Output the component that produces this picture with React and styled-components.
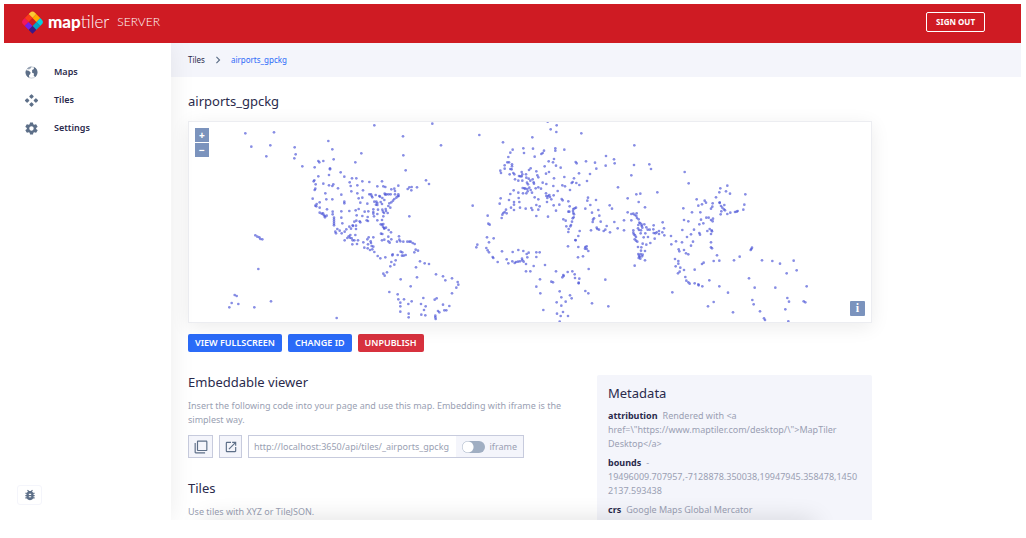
import React from "react";
import styled, { createGlobalStyle, ThemeProvider } from "styled-components";
import { MdFilterNone, MdOpenInNew, MdBugReport, MdChevronRight } from "react-icons/md";
import { IoMdSettings } from "react-icons/io";

const theme = {
    red: "#cf1b23",
    danger: "#d7313e",
    blue: "#2b6bf8",
    ink: "#2a2a4c",
    muted: "#9a9fb3",
    steel: "#5d6f88",
    pale: "#f4f5fb",
    line: "#c7cbdd",
    control: "#7b93bd",
    dot: "#4650d6",
};

const GlobalStyle = createGlobalStyle`
    * {
        box-sizing: border-box;
    }

    body {
        margin: 0;
        background: #fff;
        font-family: "Noto Sans", "Open Sans", sans-serif;
        font-size: 9px;
        line-height: 14px;
    }

    h1, h2, p, ul, ol, dl, dd {
        margin: 0;
        padding: 0;
    }

    button, input {
        font: inherit;
    }
`

const Page = styled.div`
    height: 100vh;
    padding: 4px 5px 18px 4px;
    display: flex;
    flex-direction: column;
    color: ${props => props.theme.ink};
`

const Header = styled.header`
    flex: none;
    height: 39px;
    padding: 0 36px 4px 18px;
    display: flex;
    align-items: center;
    justify-content: space-between;
    background: ${props => props.theme.red};
    color: #fff;
`

const Brand = styled.a`
    display: flex;
    align-items: center;
    gap: 5px;
    color: inherit;
    text-decoration: none;
    font-family: Lato, sans-serif;
    line-height: 20px;

    svg {
        width: 21px;
        height: 24px;
    }
`

const BrandName = styled.span`
    font-size: 17px;
    font-weight: 300;

    b {
        font-weight: 900;
    }
`

const BrandProduct = styled.span`
    margin-left: 3px;
    font-size: 12px;
    font-weight: 300;
`

const SignOut = styled.button`
    height: 20px;
    padding: 0 9px;
    border: 1px solid #fff;
    border-radius: 2px;
    background: none;
    color: #fff;
    font-size: 8px;
    font-weight: 700;
    line-height: 10px;
`

const Body = styled.div`
    flex: 1;
    min-height: 0;
    display: flex;
`

const Sidebar = styled.aside`
    flex: none;
    width: 167px;
    padding: 15px 13px 15px 20px;
    display: flex;
    flex-direction: column;
    justify-content: space-between;
    align-items: flex-start;
    background: #fff;
    box-shadow: 0 0 24px rgba(0, 0, 0, 0.08);
    clip-path: inset(0 -24px 0 0);
    z-index: 1;
`

const Menu = styled.ul`
    list-style: none;
`

const MenuLink = styled.a`
    height: 28px;
    display: flex;
    align-items: center;
    gap: 15px;
    color: inherit;
    font-weight: 600;
    text-decoration: none;

    svg {
        width: 15px;
        height: 15px;
        color: ${props => props.theme.steel};
    }
`

const BugButton = styled.button`
    width: 25px;
    height: 20px;
    margin-left: -7px;
    padding: 0;
    display: grid;
    place-items: center;
    border: 1px solid ${props => props.theme.pale};
    border-radius: 3px;
    background: #fff;
    color: ${props => props.theme.steel};

    svg {
        width: 14px;
        height: 14px;
    }
`

const Content = styled.main`
    position: relative;
    flex: 1;
    min-width: 0;
    overflow: hidden;

    &:after {
        content: "";
        position: absolute;
        left: 32px;
        right: 206px;
        bottom: -14px;
        height: 12px;
        box-shadow: 0 0 24px rgba(0, 0, 0, 0.2);
    }
`

const Breadcrumb = styled.nav`
    height: 34px;
    padding: 0 17px;
    display: flex;
    align-items: center;
    gap: 6px;
    background: ${props => props.theme.pale};
    font-size: 8px;

    svg {
        width: 14px;
        height: 14px;
        color: ${props => props.theme.steel};
    }
`

const Crumb = styled.a`
    color: ${props => props.$current ? props.theme.blue : props.theme.ink};
    text-decoration: none;
`

const Inner = styled.div`
    max-width: 718px;
    padding: 14px 17px;
`

const Title = styled.h1`
    margin-bottom: 10px;
    font-size: 13px;
    font-weight: 400;
    line-height: 20px;
`

const Heading = styled.h2`
    margin-bottom: 10px;
    font-size: 13px;
    font-weight: 400;
    line-height: 14px;
`

const MapBox = styled.div`
    position: relative;
    height: 202px;
    border: 1px solid #ecedf1;
    background: #fff;
    box-shadow: 0 4px 18px rgba(0, 0, 0, 0.08);
`

const Points = styled.svg`
    display: block;
    width: 100%;
    height: 100%;

    circle {
        fill: ${props => props.theme.dot};
        fill-opacity: 0.65;
    }
`

const ZoomControls = styled.div`
    position: absolute;
    top: 6px;
    left: 6px;
    display: grid;
    gap: 1px;
`

const MapButton = styled.button`
    width: 14px;
    height: 14px;
    padding: 0;
    border: 0;
    background: ${props => props.theme.control};
    color: #fff;
    font-size: 10px;
    font-weight: 800;
    line-height: 14px;
`

const InfoButton = styled(MapButton)`
    position: absolute;
    right: 6px;
    bottom: 6px;
    height: 15px;
    width: 15px;
    border-radius: 1px;
    font-family: "Liberation Serif", serif;
    font-size: 12px;
    line-height: 15px;
`

const Actions = styled.div`
    margin-top: 11px;
    display: flex;
    gap: 6px;
`

const Action = styled.button`
    height: 18px;
    padding: 0 7px;
    border: 0;
    border-radius: 2px;
    background: ${props => props.$danger ? props.theme.danger : props.theme.blue};
    color: #fff;
    font-size: 9px;
    font-weight: 600;
    line-height: 18px;
`

const Columns = styled.div`
    margin-top: 23px;
    display: grid;
    grid-template-columns: minmax(0, 1fr) 275px;
    gap: 12px;
`

const Text = styled.p`
    color: ${props => props.theme.muted};
`

const EmbedRow = styled.div`
    margin: 8px 0 23px;
    display: flex;
    gap: 6px;
`

const IconButton = styled.button`
    width: ${props => props.$wide ? 25 : 23}px;
    height: 23px;
    padding: 0;
    display: grid;
    place-items: center;
    border: 1px solid ${props => props.theme.line};
    background: ${props => props.theme.pale};
    color: ${props => props.theme.steel};

    svg {
        width: 14px;
        height: 14px;
    }
`

const EmbedField = styled.div`
    width: 276px;
    height: 23px;
    display: flex;
    border: 1px solid ${props => props.theme.line};
`

const UrlInput = styled.input`
    flex: 1;
    min-width: 0;
    padding: 0 5px;
    border: 0;
    color: ${props => props.theme.muted};
    outline: none;
`

const SwitchLabel = styled.label`
    padding: 0 6px;
    display: flex;
    align-items: center;
    gap: 5px;
    background: ${props => props.theme.pale};
    color: ${props => props.theme.muted};
`

const Switch = styled.input`
    appearance: none;
    width: 23px;
    height: 12px;
    margin: 0;
    border-radius: 6px;
    background: radial-gradient(circle at ${props => props.checked ? "17px" : "6px"} 6px, #fff 5px, #a0aec2 6px);
`

const Metadata = styled.section`
    padding: 11px;
    border-radius: 2px;
    background: ${props => props.theme.pale};

    ${Heading} {
        margin-bottom: 9px;
    }
`

const MetaItem = styled.div`
    margin-bottom: 5px;
    overflow-wrap: break-word;
    color: ${props => props.theme.muted};

    dt, dd {
        display: inline;
    }

    dt {
        margin-right: 5px;
        color: ${props => props.theme.ink};
        font-weight: 700;
    }
`

// Airport positions, three units to a pixel, grouped by part of the world
const regions = [
    {
        name: "americas",
        shift: "-27 -21",
        points: `583,31 669,64 196,55 282,52 214,95 271,91 259,124 344,97 347,118 343,130 367,154 445,78 457,103 461,133 544,115 526,142 670,121 677,166
            415,138 418,142 430,138 404,157 450,160 450,163 482,172 447,180 415,184 403,196 401,199 407,208 430,206 447,211 457,213 460,208 474,220 493,185 516,190 529,190
            509,202 512,213 514,229 532,211 532,235 549,226 547,199 568,201 592,214 606,199 610,214 616,216 634,223 643,221 645,228 655,212 656,243 683,222 688,217
            406,221 404,225 436,235 398,251 439,253 457,253 484,239 493,260 493,265 410,267 419,262 406,272 409,274 419,278 441,283 419,293 425,296 429,295 431,300 434,303 440,302 435,307
            458,290 458,298 484,289 508,288 484,308 462,308 462,314 462,320 462,326 462,331 487,325 472,342 466,350 468,355 479,347 485,355 494,350 499,343
            508,335 513,341 518,331 519,333 528,342 528,332 523,320 529,317 539,319 541,322 527,286 530,301 547,303 536,282 541,263 536,250 547,248 562,266 554,290 565,289
            560,316 564,318 563,306 568,238 573,238 575,243 577,247 587,240 598,243 600,245 607,249 613,255 614,236 616,239 620,238 626,238 632,238 645,238 655,238 653,244 649,248 643,252 639,257 634,262 628,265 625,273 631,278
            583,260 589,260 592,264 588,269 592,270 602,261 606,267 580,283 580,291 580,296 582,304 594,284 592,297 592,316 607,284 609,290 612,294 617,282 618,288 623,294 610,304 606,315
            602,328 606,329 610,327 609,335 612,339 613,341 618,338 626,345 633,352 603,356 607,357 606,376 613,374 625,379 625,365 634,373 629,383
            526,360 511,360 506,364 502,369 510,368 515,370 518,376 523,376 534,376 494,376 531,387 517,388 550,382 562,373 566,367 580,367 572,379 573,384 564,388 575,393 580,395 553,398 563,400 570,405 577,403 583,411
            593,423 601,430 616,427 637,421 634,441 647,436 643,449 631,454 653,420 638,418 662,410 667,412 666,422 671,422 677,420 657,364 658,374 651,380 661,379 670,380 682,380 688,380
            621,472 610,476 614,482 662,493 628,531 653,538 655,553 672,553 661,563 661,574 661,590 685,567 686,596 686,607
            226,361 232,365 238,367 241,372 247,373 235,462 164,540 170,543 155,564 175,567 148,577 223,577 273,559 470,609 688,304`,
    },
    {
        name: "emea",
        shift: "663 -21",
        points: `67,26 208,60 279,82 93,91 48,196 57,207 5,216 4,226 21,217 188,272 233,302 235,326 239,329 231,367 251,370 237,382 229,399 233,406 237,412 248,426 250,429 263,441 202,389 199,397
            422,43 440,31 439,51 514,55 367,67 413,20 308,104 301,113 295,126 340,100 342,114 369,101 374,125 402,107 398,114 394,117 436,100 436,107 463,104
            292,142 297,142 306,148 306,154 301,162 305,163 284,151 284,161 271,167 273,174 299,178 310,174 313,178 315,193 335,171 337,178 331,184 327,183 335,184 348,178 349,188 357,165 362,160 379,169 382,181 385,187
            325,197 337,197 356,191 361,197 351,203 354,208 368,193 371,202 372,206 385,217 393,221 377,220 398,203 409,207 408,176 417,171 404,154 416,139 429,142 432,132 438,152 452,158
            343,220 338,219 346,221 352,222 358,218 362,225 349,235 339,235 366,233 353,229 325,233 311,226 301,237 272,250 269,266 297,255 312,261 328,261 312,269 303,278 312,285 288,284 284,291 290,295 280,294 277,299 275,309
            326,249 330,278 347,281 364,279 367,285 379,270 389,274 385,284 374,247 385,253 379,303 414,305 408,235 409,243 414,243 418,240 420,246 412,249 411,261 424,253 431,241 431,271 443,228 448,269 438,287 430,213
            432,190 463,186 457,211 465,214 480,225 485,204 488,201 492,190 499,204 508,210 507,175 531,198 540,177 497,141 500,145 528,139 555,143 559,161 588,123 587,152 612,133 614,145 673,91 672,150 664,181 624,217
            455,252 458,256 475,259 479,274 475,290 478,290 490,282 494,280 498,278 489,288 490,294 492,298 491,307 488,310 486,320 483,330 481,334 467,317 460,313 469,334 476,342 475,351 509,348 505,363 496,375 497,376
            474,394 505,396 526,396 530,394 525,401 530,402 535,408 519,424 504,427 536,462 586,494 534,248 532,257 541,270 558,255 526,281 546,293 549,314 548,321 552,310 565,285 568,302 572,320 543,346 560,338 562,342 567,344 581,348 586,344 590,333 600,352 613,321 623,340 642,316 642,346
            599,271 606,281 653,250 679,238 686,261 653,292 664,297 670,296 680,295 674,300 679,303 681,309 686,313 664,316
            276,409 308,411 325,405 340,408 356,413 379,412 389,412 350,417 352,427 379,426 336,431 337,436 330,439 324,440 318,441 314,444 307,439 290,433 295,445 341,440 348,447 371,453 405,450 348,469 361,469 390,493 379,515 391,535 400,585
            438,469 424,500 429,502 460,480 461,483 457,487 473,471 487,469 494,478 495,489 508,491 506,503 506,505 449,529 480,541 485,550 454,547 440,562 454,572 467,560 441,596 459,591 452,603 474,603 449,620 526,528 535,535 546,565 595,574
            2,380 8,384 14,387 17,404 24,407 13,412 30,439 44,445 57,447 18,457 21,487 2,514 78,478 99,484 106,496 126,490 143,501 145,509 139,518 126,535 118,573 99,569 103,586 109,586 40,549 80,550 74,554 33,567 47,574 42,585 34,599 46,601 76,602 76,607 77,612 84,588 88,592 5,559`,
    },
    {
        name: "asiaPacific",
        shift: "1353 -21",
        points: `28,148 33,162 134,171 146,205 52,232 1,236 15,277 262,212 241,220 238,232 258,229 270,236 316,238 228,247 313,269 310,284 170,253 194,257 198,263 186,268 175,272 218,265 217,275 213,281 130,280 156,292 181,292
            239,262 239,264 243,273 247,278 253,270 252,283 255,286 244,289 242,298 262,297 271,293 285,291 290,290 293,288
            132,315 145,319 183,314 190,325 178,328 199,308 206,308 213,315 219,311 218,319 202,348 209,342 215,346 216,349 213,357 178,354 180,359 162,344 153,358 141,366 127,345 126,382 108,379 93,363 94,388 159,380 153,392 213,382 213,397 216,400 231,421 238,437 221,438
            1,325 5,333 7,338 13,328 19,337 23,344 29,344 41,331 40,343 41,354 46,355 50,352 57,348 57,357 67,352 68,322 72,340 73,361 44,371 31,384 19,389 8,386 24,366 11,367 2,355 16,355 3,407 15,408 2,417 8,419 6,424 1,431 15,436
            116,403 118,409 132,405 138,415 145,418 105,432 115,438 115,446 107,454 121,458 119,470 114,475 132,465 164,464 186,447 191,443 136,486 139,497 145,502 149,506 164,505 175,508 176,511 187,514 208,496 238,514 97,532 264,533 221,561 204,574 279,592
            282,436 299,425 336,398 334,402 332,405 366,436 397,438 420,446 461,437 470,466 440,475 327,490 344,518 406,518 500,514 337,555 341,568 360,589 372,610 375,615 442,549 447,560 436,583 491,559 496,562 445,619
            -20,346 -20,353 -18,358 -15,361 -12,366 -16,373 -12,377 -8,380 -6,340 -5,330 -2,323 -3,345 3,346 5,329 -6,396 -5,417 -3,422 -1,425 -4,429 4,397 -16,452`,
    },
];

// The logo is a diamond of tiles round an empty middle, given here row by row before it is turned
const logoTiles = [
    "#fbc935", "#ffaa01", "#05d0df",
    "#fb3a1b", "none", "#03a1c4",
    "#f1175d", "#761fe8", "#3a1888",
];

const metadata = [
    { name: "attribution", value: 'Rendered with <a href=\\"https://www.maptiler.com/desktop/\\">MapTiler Desktop</a>' },
    { name: "bounds", value: "-\u200b19496009.707957,-7128878.350038,19947945.358478,14502137.593438" },
    { name: "crs", value: "Google Maps Global Mercator" },
];

function Logo() {
    return (
        <svg viewBox="0 0 21 24" aria-hidden="true">
            <clipPath id="pin">
                <path d="M-4.2 -8.4H4.4Q8.4 -8.4 8.4 -4.4V8.4H-4.4Q-8.4 8.4 -8.4 4.4V-4.2Q-8.4 -8.4 -4.2 -8.4z" />
            </clipPath>
            <g transform="translate(10.5 12) rotate(45)" clipPath="url(#pin)">
                {logoTiles.map((color, i) => (
                    <rect key={i} x={-8.4 + (i % 3) * 5.6} y={-8.4 + Math.floor(i / 3) * 5.6} width="5.6" height="5.6" fill={color} />
                ))}
            </g>
        </svg>
    );
}

function GlobeIcon() {
    return (
        <svg viewBox="0 0 24 24" fill="currentColor" aria-hidden="true">
            <circle cx="12" cy="12" r="9" fill="none" stroke="currentColor" strokeOpacity="0.5" />
            <path d="M3.5 8.5l4 .5 3 2.5-.5 3-2 2 .5 4C5 19 2.500 15.500 2.500 12c0-1.500.4-2.500 1-3.500z" />
            <path d="M13 8l3-1.500L15.500 4l1.500-.5c3 1.700 4.700 5 4.500 8.500-.1 3-1.500 5.500-3.500 7.300L15.500 17l.5-3.500-3-1z" />
            <path d="M5 6C6.500 4 9 2.500 12 2.500L11 5 8 7z" fillOpacity="0.6" />
        </svg>
    );
}

function TilesIcon() {
    return (
        <svg viewBox="0 0 24 24" fill="currentColor" stroke="currentColor" strokeWidth="2" strokeLinejoin="round" aria-hidden="true">
            <path d="M12 3l2.500 2.500-2.500 2.500-2.500-2.500zM5 9.500l2.500 2.500-2.500 2.500-2.500-2.500zM19 9.500l2.500 2.500-2.500 2.500-2.500-2.500zM12 16l2.500 2.500-2.500 2.500-2.500-2.500z" />
        </svg>
    );
}

function AirportMap() {
    return (
        <MapBox>
            <Points viewBox="0 0 2046 600" preserveAspectRatio="xMidYMid slice" role="img" aria-label="Map of airports">
                {regions.map(region => (
                    <g key={region.name} transform={`translate(${region.shift})`}>
                        {region.points.split(/\s+/).map((point, i) => {
                            const [x, y] = point.split(",");
                            return <circle key={i} cx={x} cy={y} r="4" />;
                        })}
                    </g>
                ))}
            </Points>
            <ZoomControls>
                <MapButton aria-label="Zoom in">+</MapButton>
                <MapButton aria-label="Zoom out">−</MapButton>
            </ZoomControls>
            <InfoButton aria-label="Attributions">i</InfoButton>
        </MapBox>
    );
}

function App() {
    const [iframe, setIframe] = React.useState(false);

    return (
        <ThemeProvider theme={theme}>
            <GlobalStyle />
            <Page>
                <Header>
                    <Brand href="#">
                        <Logo />
                        <BrandName><b>map</b>tiler</BrandName>
                        <BrandProduct>SERVER</BrandProduct>
                    </Brand>
                    <SignOut>SIGN OUT</SignOut>
                </Header>
                <Body>
                    <Sidebar>
                        <Menu>
                            <li><MenuLink href="#maps"><GlobeIcon />Maps</MenuLink></li>
                            <li><MenuLink href="#tiles"><TilesIcon />Tiles</MenuLink></li>
                            <li><MenuLink href="#settings"><IoMdSettings />Settings</MenuLink></li>
                        </Menu>
                        <BugButton aria-label="Report a bug"><MdBugReport /></BugButton>
                    </Sidebar>
                    <Content>
                        <Breadcrumb>
                            <Crumb href="#tiles">Tiles</Crumb>
                            <MdChevronRight />
                            <Crumb href="#airports" $current>airports_gpckg</Crumb>
                        </Breadcrumb>
                        <Inner>
                            <Title>airports_gpckg</Title>
                            <AirportMap />
                            <Actions>
                                <Action>VIEW FULLSCREEN</Action>
                                <Action>CHANGE ID</Action>
                                <Action $danger>UNPUBLISH</Action>
                            </Actions>
                            <Columns>
                                <div>
                                    <Heading>Embeddable viewer</Heading>
                                    <Text>Insert the following code into your page and use this map. Embedding with iframe is the simplest way.</Text>
                                    <EmbedRow>
                                        <IconButton $wide aria-label="Copy"><MdFilterNone /></IconButton>
                                        <IconButton aria-label="Open"><MdOpenInNew /></IconButton>
                                        <EmbedField>
                                            <UrlInput readOnly aria-label="Viewer address" value="http://localhost:3650/api/tiles/_airports_gpckg" />
                                            <SwitchLabel>
                                                <Switch type="checkbox" checked={iframe} onChange={e => setIframe(e.target.checked)} />
                                                iframe
                                            </SwitchLabel>
                                        </EmbedField>
                                    </EmbedRow>
                                    <Heading>Tiles</Heading>
                                    <Text>Use tiles with XYZ or TileJSON.</Text>
                                </div>
                                <Metadata>
                                    <Heading>Metadata</Heading>
                                    <dl>
                                        {metadata.map(item => (
                                            <MetaItem key={item.name}>
                                                <dt>{item.name}</dt>
                                                <dd>{item.value}</dd>
                                            </MetaItem>
                                        ))}
                                    </dl>
                                </Metadata>
                            </Columns>
                        </Inner>
                    </Content>
                </Body>
            </Page>
        </ThemeProvider>
    );
}

export default App;
